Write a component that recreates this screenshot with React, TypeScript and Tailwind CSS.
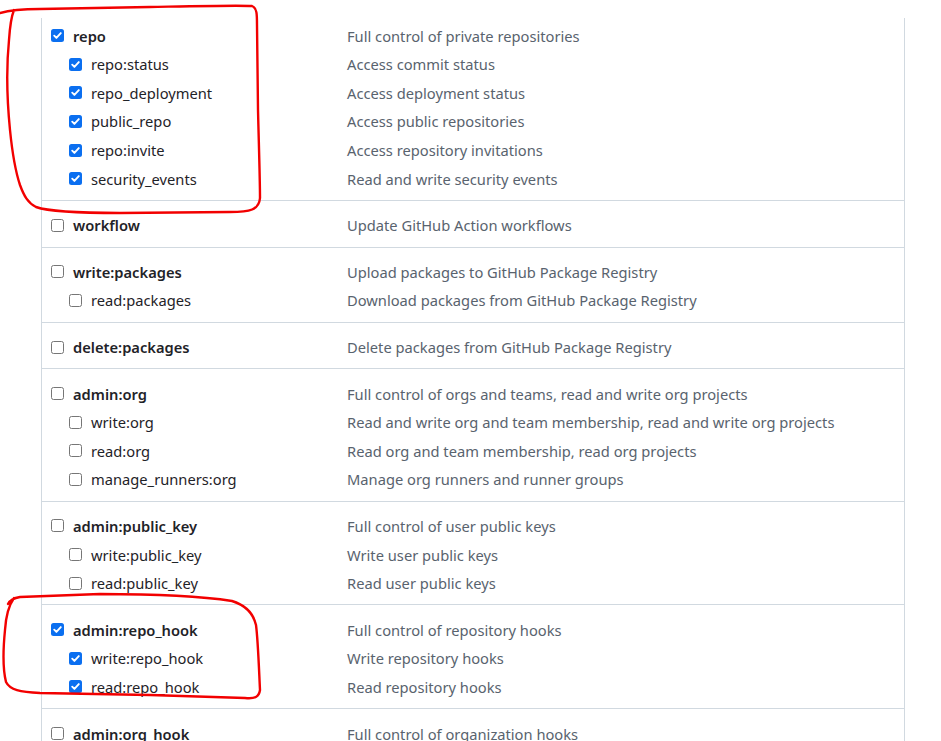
import React from "react";

type Scope = { name: string; desc: string; checked?: boolean };
type Group = { main: Scope; subs: Scope[] };

const groups: Group[] = [
  {
    main: { name: "repo", desc: "Full control of private repositories", checked: true },
    subs: [
      { name: "repo:status", desc: "Access commit status", checked: true },
      { name: "repo_deployment", desc: "Access deployment status", checked: true },
      { name: "public_repo", desc: "Access public repositories", checked: true },
      { name: "repo:invite", desc: "Access repository invitations", checked: true },
      { name: "security_events", desc: "Read and write security events", checked: true },
    ],
  },
  { main: { name: "workflow", desc: "Update GitHub Action workflows" }, subs: [] },
  {
    main: { name: "write:packages", desc: "Upload packages to GitHub Package Registry" },
    subs: [{ name: "read:packages", desc: "Download packages from GitHub Package Registry" }],
  },
  { main: { name: "delete:packages", desc: "Delete packages from GitHub Package Registry" }, subs: [] },
  {
    main: { name: "admin:org", desc: "Full control of orgs and teams, read and write org projects" },
    subs: [
      { name: "write:org", desc: "Read and write org and team membership, read and write org projects" },
      { name: "read:org", desc: "Read org and team membership, read org projects" },
      { name: "manage_runners:org", desc: "Manage org runners and runner groups" },
    ],
  },
  {
    main: { name: "admin:public_key", desc: "Full control of user public keys" },
    subs: [
      { name: "write:public_key", desc: "Write user public keys" },
      { name: "read:public_key", desc: "Read user public keys" },
    ],
  },
  {
    main: { name: "admin:repo_hook", desc: "Full control of repository hooks", checked: true },
    subs: [
      { name: "write:repo_hook", desc: "Write repository hooks", checked: true },
      { name: "read:repo_hook", desc: "Read repository hooks", checked: true },
    ],
  },
  { main: { name: "admin:org_hook", desc: "Full control of organization hooks" }, subs: [] },
  { main: { name: "gist", desc: "Create gists" }, subs: [] },
];

function Box({ checked }: { checked?: boolean }) {
  if (checked) {
    return (
      <span className="flex h-[13px] w-[13px] shrink-0 items-center justify-center rounded-[2.5px] bg-[#0b6ff0]">
        <svg width="13" height="13" viewBox="0 0 13 13">
          <path d="M3.2 6.7 L5.4 8.9 L9.8 4.1" fill="none" stroke="#fff" strokeWidth="1.9" strokeLinecap="round" strokeLinejoin="round" />
        </svg>
      </span>
    );
  }
  return <span className="h-[13px] w-[13px] shrink-0 rounded-[2.5px] border border-[#767676] bg-white" />;
}

function Row({ s, sub }: { s: Scope; sub?: boolean }) {
  return (
    <div className="flex h-[28.6px] items-center">
      <div className={`flex w-[296px] shrink-0 items-center gap-[9px] ${sub ? "pl-[18px]" : ""}`}>
        <Box checked={s.checked} />
        <span className={sub ? "text-[#1f2328]" : "font-semibold text-[#1f2328]"}>{s.name}</span>
      </div>
      <span className="text-[#59636e]">{s.desc}</span>
    </div>
  );
}

export default function App() {
  return (
    <div
      className="relative h-[741px] w-[941px] overflow-hidden bg-white text-[14.7px]"
      style={{ fontFamily: '"Segoe UI", "Noto Sans", sans-serif' }}
    >
      <div className="ml-[41px] mt-[18px] w-[864px] border-x border-[#d1d9e0]">
        {groups.map((g, i) => (
          <div
            key={g.main.name}
            className={i === 0 ? "pl-[9px] pt-[3.4px] pb-[7px]" : "border-t border-[#d1d9e0] pl-[9px] pt-[10px] pb-[7px]"}
          >
            <Row s={g.main} />
            {g.subs.map((s) => (
              <Row key={s.name} s={s} sub />
            ))}
          </div>
        ))}
      </div>
      <svg
        className="pointer-events-none absolute left-0 top-0"
        width="941"
        height="741"
        viewBox="0 0 941 741"
      >
        <path
          d="M0 13 C10 10 20 9 40 9 L150 7 C200 6 240 5 252 6 C257 8 257 14 257 25 L258 110 C259 150 260 180 260 198 C259 210 250 212 230 212 L120 213 C80 213 50 212 36 207 C28 203 24 196 20 185 C15 170 12 150 10 130 C7 100 6 70 9 40 C10 25 12 15 14 10"
          fill="none"
          stroke="#f20000"
          strokeWidth="2.4"
          strokeLinecap="round"
          strokeLinejoin="round"
        />
        <path
          d="M8 604 C10 600 14 598 20 597 L100 594 C160 594 200 596 232 601 C245 605 253 612 256 625 C258 640 259 670 260 690 C259 697 255 699 245 698 L150 695 L40 693 C20 692 10 690 6 682 C3 670 3 650 5 630 C6 615 9 605 14 598"
          fill="none"
          stroke="#f20000"
          strokeWidth="2.4"
          strokeLinecap="round"
          strokeLinejoin="round"
        />
      </svg>
    </div>
  );
}
